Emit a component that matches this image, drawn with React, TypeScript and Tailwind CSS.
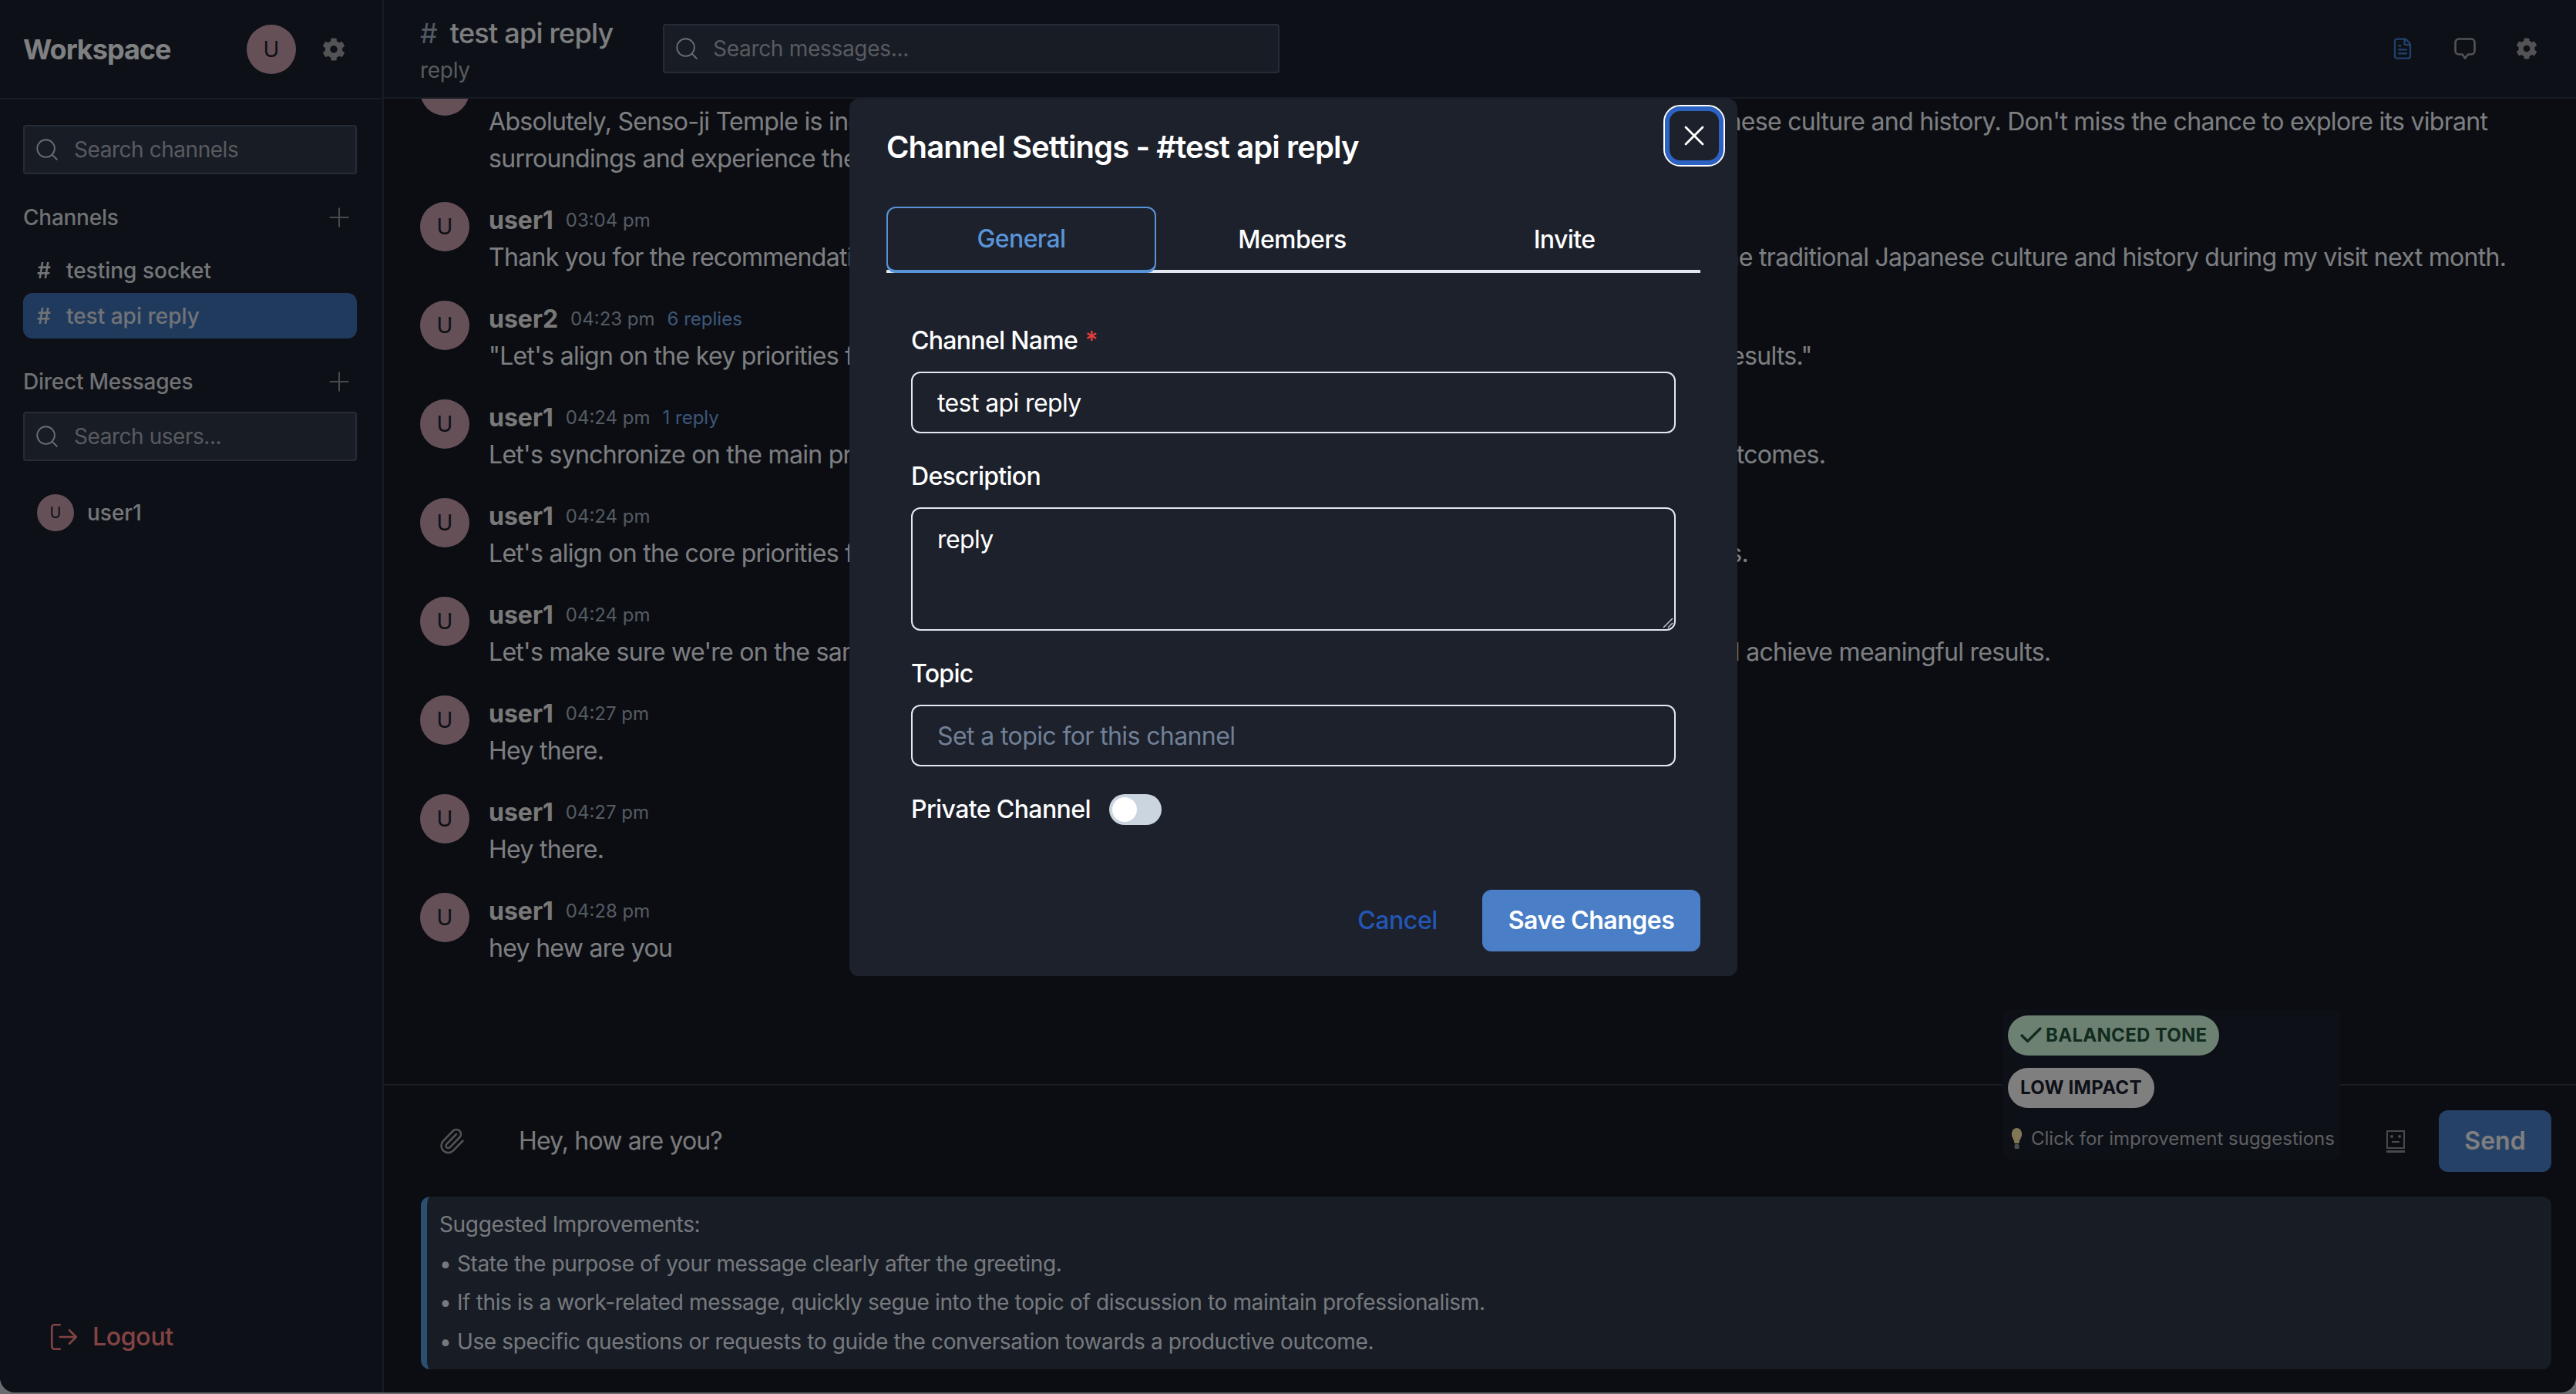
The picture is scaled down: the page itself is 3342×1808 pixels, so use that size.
import { Search, Plus, FileText, Paperclip, LogOut, Check, X } from "lucide-react";
import { FaCog } from "react-icons/fa";

type Msg = { name: string; time: string; text: string; extra?: string };

const messages: Msg[] = [
  { name: "user2", time: "03:03 pm", text: "Absolutely, Senso-ji Temple is indeed a must-visit attraction in Tokyo giving a deep glimpse into traditional Japanese culture and history. Don't miss the chance to explore its vibrant surroundings and experience the rich atmosphere of the area during your upcoming trip." },
  { name: "user1", time: "03:04 pm", text: "Thank you for the recommendation! I'm looking forward to exploring Senso-ji Temple and immersing myself in the traditional Japanese culture and history during my visit next month." },
  { name: "user2", time: "04:23 pm", extra: "6 replies", text: "\"Let's align on the key priorities for the upcoming project to ensure we're all set and on track for using the best results.\"" },
  { name: "user1", time: "04:24 pm", extra: "1 reply", text: "Let's synchronize on the main priorities for the incoming project to ensure we're aligned and achieve the best outcomes." },
  { name: "user1", time: "04:24 pm", text: "Let's align on the core priorities for the upcoming project to ensure we meet our real goals and shared objectives." },
  { name: "user1", time: "04:24 pm", text: "Let's make sure we're on the same page regarding the project priorities so that we could work together and we'll achieve meaningful results." },
  { name: "user1", time: "04:27 pm", text: "Hey there." },
  { name: "user1", time: "04:27 pm", text: "Hey there." },
  { name: "user1", time: "04:28 pm", text: "hey hew are you" },
];

function Avatar({ size = "w-16 h-16 text-[28px]" }: { size?: string }) {
  return (
    <div className={`${size} shrink-0 rounded-full bg-[#c39aa9] text-[#1a202c] flex items-center justify-center`}>U</div>
  );
}

function SearchBox({ placeholder, className }: { placeholder: string; className: string }) {
  return (
    <div className={`${className} h-16 flex items-center gap-[18px] px-[12px] bg-[#2d3748] border-2 border-[#4a5568] rounded-[4px]`}>
      <Search size={34} strokeWidth={1.3} className="text-[#cbd5e0] shrink-0" />
      <span className="text-[28px] tracking-[-0.45px] text-[#a8adb6]">{placeholder}</span>
    </div>
  );
}

function ChatBubble() {
  return (
    <svg width="28" height="28" viewBox="0 0 28 28" fill="none" stroke="#a0a0a6" strokeWidth="2.6" strokeLinejoin="round">
      <path d="M6 1.5h16a4.5 4.5 0 0 1 4.5 4.5v11a4.5 4.5 0 0 1-4.5 4.5h-4l-4 5-3.5-5H6A4.5 4.5 0 0 1 1.5 17V6A4.5 4.5 0 0 1 6 1.5z" />
    </svg>
  );
}

function Bulb() {
  return (
    <svg width="15" height="30" viewBox="0 0 18 30" preserveAspectRatio="none">
      <path d="M9 1C4.5 1 1 4.6 1 9c0 4 3 6 4 10 .2 1 .5 2 1 2h6c.5 0 .8-1 1-2 1-4 4-6 4-10 0-4.4-3.500-8-8-8z" fill="#f7e3a4" />
      <rect x="5.500" y="22" width="7" height="6" rx="1.500" fill="#9a9a9a" />
    </svg>
  );
}

function Face() {
  return (
    <svg width="24" height="29" viewBox="0 0 24 29" fill="none">
      <rect x="1" y="1" width="22" height="22" stroke="#8a8c92" strokeWidth="2" />
      <circle cx="7" cy="8" r="2" fill="#8a8c92" />
      <circle cx="17" cy="8" r="2" fill="#8a8c92" />
      <rect x="7" y="14" width="10" height="2" fill="#8a8c92" />
      <rect x="0" y="26" width="24" height="3" fill="#8a8c92" />
    </svg>
  );
}

function Label({ children }: { children: React.ReactNode }) {
  return <div className="h-12 mb-4 text-[32px] leading-[48px] tracking-[-0.7px] font-medium text-white">{children}</div>;
}

export default function App() {
  return (
    <div className="relative h-screen w-full overflow-hidden bg-[#6a6b70] font-[family-name:Inter,sans-serif]">
      <div className="relative h-[1806px] w-full overflow-hidden flex rounded-b-[20px] bg-[#171923]">
        <aside className="w-[498px] shrink-0 h-full bg-[#1a202c] border-r-2 border-[#2d3748] flex flex-col">
          <div className="h-[129px] shrink-0 border-b-2 border-[#2d3748] pl-[30px] pr-[34px] flex items-center justify-between">
            <span className="text-[36px] tracking-[-1px] font-bold text-[#f4f5f7]">Workspace</span>
            <div className="flex items-center gap-[20px]">
              <Avatar />
              <FaCog size={30} className="text-[#a0a0a6] mx-[14px]" />
            </div>
          </div>
          <div className="flex-1 flex flex-col pl-[30px] pr-[33px] pt-[33px]">
            <SearchBox placeholder="Search channels" className="w-full" />
            <div className="mt-[32px] h-[48px] flex items-center justify-between pr-[3px]">
              <span className="text-[28px] tracking-[-0.25px] font-medium text-[#d5d8dd]">Channels</span>
              <Plus size={40} strokeWidth={1.2} className="text-[#8e9096]" />
            </div>
            <div className="mt-[15px] flex flex-col">
              <div className="h-[59px] flex items-center gap-[20px] pl-[18px] text-[28px] font-medium text-[#dfe2e7]">
                <span>#</span>
                <span>testing socket</span>
              </div>
              <div className="h-[59px] flex items-center gap-[20px] pl-[18px] text-[28px] font-medium text-[#d9dde3] bg-[#3f70b5] rounded-[12px]">
                <span>#</span>
                <span>test api reply</span>
              </div>
            </div>
            <div className="mt-[32px] h-[48px] flex items-center justify-between pr-[3px]">
              <span className="text-[28px] tracking-[-0.25px] font-medium text-[#d5d8dd]">Direct Messages</span>
              <Plus size={40} strokeWidth={1.2} className="text-[#8e9096]" />
            </div>
            <SearchBox placeholder="Search users..." className="w-full mt-[15px]" />
            <div className="mt-[43px] flex items-center gap-[17px] pl-[18px]">
              <Avatar size="w-12 h-12 text-[20px]" />
              <span className="text-[28px] font-medium text-[#dfe2e7]">user1</span>
            </div>
            <div className="mt-auto mb-[48px] ml-[32px] flex items-center gap-[16px] text-[#fc8181]">
              <LogOut size={42} strokeWidth={1.5} />
              <span className="text-[32px] tracking-[-0.3px] font-medium">Logout</span>
            </div>
          </div>
        </aside>

        <main className="flex-1 min-w-0 h-full flex flex-col">
          <header className="h-[128px] shrink-0 bg-[#1a202c] border-b-2 border-[#2d3748] flex items-center pl-[47px] pr-[50px]">
            <div className="w-[315px] shrink-0 pt-[4px]">
              <div className="flex items-center gap-[16px] h-[52px]">
                <span className="text-[36px] text-[#a0aec0]">#</span>
                <span className="text-[36px] tracking-[-0.76px] font-medium text-[#f0f2f5]">test api reply</span>
              </div>
              <div className="text-[28px] tracking-[-0.3px] text-[#a8adb6] leading-[44px]">reply</div>
            </div>
            <div className="w-[800px] h-16 flex items-center gap-[17px] px-[12px] bg-[#2d3748] border-2 border-[#4a5568] rounded-[4px]">
              <Search size={34} strokeWidth={1.3} className="text-[#cbd5e0] shrink-0" />
              <span className="text-[28px] tracking-[-0.3px] text-[#a8adb6]">Search messages...</span>
            </div>
            <div className="ml-auto flex items-center gap-[52px]">
              <FileText size={30} strokeWidth={1.8} className="text-[#3f7fd0]" />
              <ChatBubble />
              <FaCog size={28} className="text-[#a0a0a6]" />
            </div>
          </header>

          <div className="flex-1 min-h-0 overflow-hidden pl-[47px] pr-[32px]">
            <div className="mt-[-42px] flex flex-col gap-[32px]">
              {messages.map((m, i) => (
                <div key={i} className="flex gap-[25px]">
                  <Avatar />
                  <div className="min-w-0">
                    <div className="h-12 flex items-center gap-[16px]">
                      <span className="text-[32px] leading-[48px] font-bold text-[#e8e8e8]">{m.name}</span>
                      <span className="text-[24px] text-[#a0aec0]">{m.time}</span>
                      {m.extra && <span className="text-[24px] text-[#74a8e6]">{m.extra}</span>}
                    </div>
                    <p className="text-[32px] leading-[48px] tracking-[-0.7px] text-[#edf2f7]">{m.text}</p>
                  </div>
                </div>
              ))}
            </div>
          </div>

          <div className="relative shrink-0 border-t-2 border-[#2d3748] pt-[32px] pb-[30px] pl-[48px] pr-[32px]">
            <div className="h-20 flex items-center">
              <Paperclip size={36} strokeWidth={1.7} className="text-[#a0a0a6] ml-[22px]" />
              <span className="ml-[69px] text-[32px] tracking-[-0.85px] text-[#e8eaee]">Hey, how are you?</span>
              <div className="ml-auto flex items-center gap-[44px]">
                <Face />
                <div className="w-[146px] h-20 rounded-[12px] bg-[#4a7ec6] flex items-center justify-center text-[32px] font-semibold text-[#f4f4f4]">Send</div>
              </div>
            </div>
            <div className="mt-[32px] h-[224px] rounded-[12px] bg-[#2d3748] border-l-8 border-[#5596dc] pl-[16px] flex flex-col justify-center text-[28px] leading-[50.500px] tracking-[-0.35px] text-[#e2e8f0]">
              <div>Suggested Improvements:</div>
              <div>• State the purpose of your message clearly after the greeting.</div>
              <div>• If this is a work-related message, quickly segue into the topic of discussion to maintain professionalism.</div>
              <div>• Use specific questions or requests to guide the conversation towards a productive outcome.</div>
            </div>
            <div className="absolute right-[306px] top-[-99px] w-[438px] h-[195px] rounded-[12px] bg-[#1a202c] pt-[8px] px-[7px] flex flex-col items-start">
              <div className="h-[52px] pl-[12px] pr-[16px] rounded-full bg-[#d2f8db] text-[#22543d] flex items-center text-[24px] font-bold tracking-[0.3px]">
                <Check size={36} strokeWidth={2.2} />
                <span className="ml-[1px]">BALANCED TONE</span>
              </div>
              <div className="mt-[16px] h-[52px] px-[16px] rounded-full bg-[#f4f4f6] text-[#1a202c] flex items-center text-[24px] font-bold tracking-[0.3px]">LOW IMPACT</div>
              <div className="mt-[22px] flex items-center gap-[11px] pl-[4px] text-[24px] text-[#b4b7bc] whitespace-nowrap">
                <Bulb />
                <span>Click for improvement suggestions</span>
              </div>
            </div>
          </div>
        </main>

        <div className="absolute inset-0 bg-black/48 flex justify-center items-start pt-[128px] pl-[14px]">
          <div className="relative w-[1152px] h-[1138px] rounded-[12px] bg-[#1c212c] px-[48px] pt-[33px] text-white">
            <h2 className="text-[40px] leading-[60px] tracking-[-0.9px] font-semibold">Channel Settings - #test api reply</h2>
            <div className="absolute right-[18px] top-[10px] w-[76px] h-[76px] rounded-[20px] bg-[#1c212c] border-[6px] border-[#2b62c4] outline-2 outline-white flex items-center justify-center">
              <X size={44} strokeWidth={1.5} />
            </div>

            <div className="mt-[47px] flex border-b-4 border-[#e2e8f0]">
              <div className="w-[350px] shrink-0 h-[86px] -mb-[4px] rounded-[12px] border-2 border-b-4 border-[#5a94d8] text-[#5a94d8] text-[32px] tracking-[-0.6px] font-medium flex items-center justify-center">General</div>
              <div className="flex-1 h-[86px] -mb-[4px] text-[32px] tracking-[-0.6px] font-medium flex items-center justify-center">Members</div>
              <div className="flex-1 h-[86px] -mb-[4px] text-[32px] tracking-[-0.6px] font-medium flex items-center justify-center">Invite</div>
            </div>

            <div className="px-[32px] pt-[64px]">
              <Label>
                Channel Name <span className="text-[#e53e3e] ml-[2px]">*</span>
              </Label>
              <input readOnly value="test api reply" className="block w-full h-20 px-[32px] bg-transparent border-2 border-[#e2e8f0] rounded-[12px] text-[32px] tracking-[-0.6px] text-white outline-none" />

              <div className="mt-[32px]"><Label>Description</Label></div>
              <div className="relative">
                <textarea readOnly value="reply" className="block w-full h-40 px-[32px] py-[16px] bg-transparent border-2 border-[#e2e8f0] rounded-[12px] text-[32px] leading-[48px] tracking-[-0.6px] text-white outline-none resize-none" />
                <svg className="absolute right-[3px] bottom-[3px]" width="14" height="14" viewBox="0 0 14 14" fill="none" stroke="#c4c8ce" strokeWidth="1.5">
                  <path d="M1 13 13 1M7 13l6-6" />
                </svg>
              </div>

              <div className="mt-[32px]"><Label>Topic</Label></div>
              <input readOnly placeholder="Set a topic for this channel" className="block w-full h-20 px-[32px] bg-transparent border-2 border-[#e2e8f0] rounded-[12px] text-[32px] tracking-[-0.6px] text-white outline-none placeholder:text-[#718096]" />

              <div className="mt-[32px] h-12 flex items-center gap-[24px]">
                <span className="text-[32px] tracking-[-0.6px] font-medium">Private Channel</span>
                <div className="w-[68px] h-10 rounded-full bg-[#cbd5e0] p-[4px]">
                  <div className="w-8 h-8 rounded-full bg-white" />
                </div>
              </div>
            </div>

            <div className="mt-[80px] flex items-center justify-end">
              <span className="text-[32px] tracking-[-0.4px] font-medium text-[#2456b4] mr-[58px]">Cancel</span>
              <div className="h-20 w-[283px] rounded-[12px] bg-[#4a7ec6] flex items-center justify-center text-[32px] tracking-[-0.5px] font-semibold">Save Changes</div>
            </div>
          </div>
        </div>
      </div>
    </div>
  );
}
